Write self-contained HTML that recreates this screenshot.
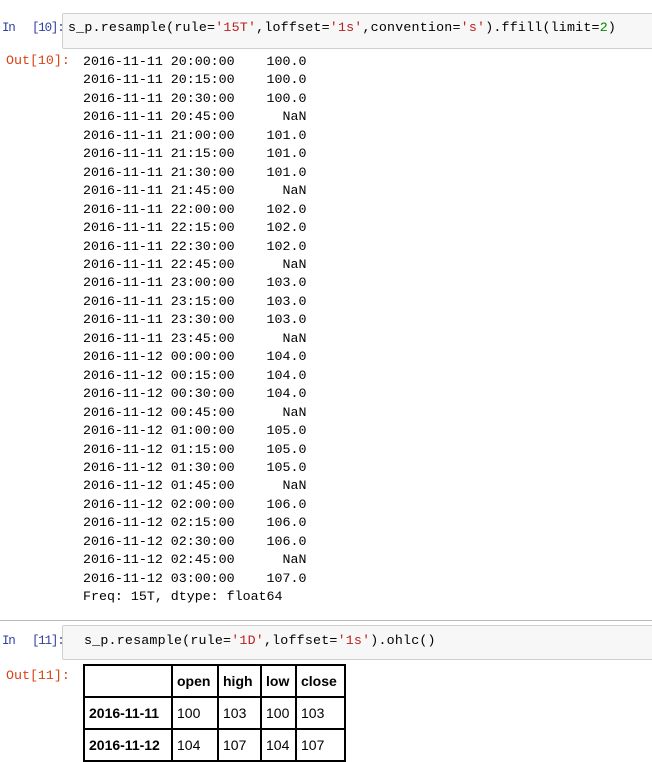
<!DOCTYPE html>
<html><head><style>
body{margin:0;width:652px;height:755px;overflow:hidden;background:#fff;font-family:"Liberation Mono",monospace;font-size:13.3px;color:#000;position:relative}
.a{position:absolute;white-space:pre;z-index:2}
.pin{color:#303f9f;font-size:12.5px;letter-spacing:-1.2px}
.pout{color:#d84315}
.box{position:absolute;left:62px;right:-2px;background:#f7f7f7;border:1px solid #cfcfcf;border-radius:2px}
.s{color:#ba2121}.n{color:#080}
table{position:absolute;left:83px;top:664px;border-collapse:collapse;table-layout:fixed;width:261px;font-family:"Liberation Sans",sans-serif;font-size:14px}
td,th{border:2px solid #000;padding:0 4px;height:30px;text-align:left;overflow:hidden;white-space:nowrap}
th{font-weight:bold}
</style></head><body>
<div class="a pin" style="left:2px;top:21px">In</div>
<div class="a pin" style="left:32px;top:21px">[10]:</div>
<div class="box" style="top:13px;height:34px"></div>
<div class="a" style="left:68px;top:20px;letter-spacing:0.2px">s_p.resample(rule=<span class="s">'15T'</span>,loffset=<span class="s">'1s'</span>,convention=<span class="s">'s'</span>).ffill(limit=<span class="n">2</span>)</div>
<div class="a pout" style="left:6px;top:53px">Out[10]:</div>
<div class="a" style="left:83px;top:53px;line-height:18.45px">2016-11-11 20:00:00    100.0
2016-11-11 20:15:00    100.0
2016-11-11 20:30:00    100.0
2016-11-11 20:45:00      NaN
2016-11-11 21:00:00    101.0
2016-11-11 21:15:00    101.0
2016-11-11 21:30:00    101.0
2016-11-11 21:45:00      NaN
2016-11-11 22:00:00    102.0
2016-11-11 22:15:00    102.0
2016-11-11 22:30:00    102.0
2016-11-11 22:45:00      NaN
2016-11-11 23:00:00    103.0
2016-11-11 23:15:00    103.0
2016-11-11 23:30:00    103.0
2016-11-11 23:45:00      NaN
2016-11-12 00:00:00    104.0
2016-11-12 00:15:00    104.0
2016-11-12 00:30:00    104.0
2016-11-12 00:45:00      NaN
2016-11-12 01:00:00    105.0
2016-11-12 01:15:00    105.0
2016-11-12 01:30:00    105.0
2016-11-12 01:45:00      NaN
2016-11-12 02:00:00    106.0
2016-11-12 02:15:00    106.0
2016-11-12 02:30:00    106.0
2016-11-12 02:45:00      NaN
2016-11-12 03:00:00    107.0
Freq: 15T, dtype: float64</div>
<div style="position:absolute;left:0;right:0;top:620px;border-top:1px solid #bbb"></div>
<div class="a pin" style="left:2px;top:634px">In</div>
<div class="a pin" style="left:32px;top:634px">[11]:</div>
<div class="box" style="top:625px;height:33px"></div>
<div class="a" style="left:84px;top:633px;letter-spacing:0.2px">s_p.resample(rule=<span class="s">'1D'</span>,loffset=<span class="s">'1s'</span>).ohlc()</div>
<div class="a pout" style="left:6px;top:668px">Out[11]:</div>
<table>
<colgroup><col style="width:88px"><col style="width:46px"><col style="width:43px"><col style="width:35px"><col style="width:49px"></colgroup>
<tr><th></th><th>open</th><th>high</th><th>low</th><th>close</th></tr>
<tr><th>2016-11-11</th><td>100</td><td>103</td><td>100</td><td>103</td></tr>
<tr><th>2016-11-12</th><td>104</td><td>107</td><td>104</td><td>107</td></tr>
</table>
</body></html>
